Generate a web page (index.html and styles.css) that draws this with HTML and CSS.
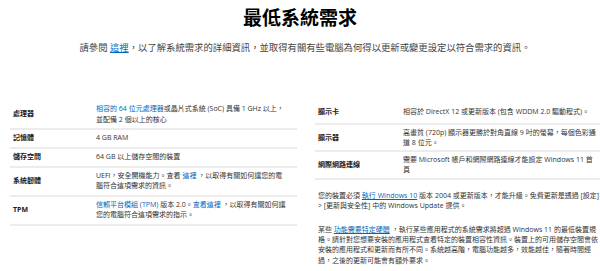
FILE: index.html
```html
<!DOCTYPE html>
<html lang="zh-Hant">
<head>
<meta charset="utf-8">
<title>最低系統需求</title>
<link rel="stylesheet" href="styles.css">
</head>
<body>
<main class="page">
  <h1 class="title">最低系統需求</h1>
  <p class="intro">請參閱 <a class="link-u" href="#">這裡</a>，以了解系統需求的詳細資訊，並取得有關有些電腦為何得以更新或變更設定以符合需求的資訊。</p>
  <div class="cols">
    <div class="spec spec-left">
      <div class="row"><div class="label">處理器</div><div class="value"><a class="link" href="#">相容的 64 位元處理器</a>或晶片式系統 (SoC) 具備 1 GHz 以上，並配備 2 個以上的核心</div></div>
      <div class="row"><div class="label">記憶體</div><div class="value">4 GB RAM</div></div>
      <div class="row"><div class="label">儲存空間</div><div class="value">64 GB 以上儲存空間的裝置</div></div>
      <div class="row"><div class="label">系統韌體</div><div class="value">UEFI，安全開機能力。查看 <a class="link" href="#">這裡</a> ，以取得有關如何讓您的電腦符合這項需求的資訊。</div></div>
      <div class="row"><div class="label">TPM</div><div class="value"><a class="link" href="#">信賴平台模組 (TPM)</a> 版本 2.0。<a class="link" href="#">查看這裡</a> ，以取得有關如何讓您的電腦符合這項需求的指示。</div></div>
    </div>
    <div class="right">
      <div class="spec spec-right">
        <div class="row row-first"><div class="label">顯示卡</div><div class="value">相容於 DirectX 12 或更新版本 (包含 WDDM 2.0 驅動程式)。</div></div>
        <div class="row"><div class="label">顯示器</div><div class="value">高畫質 (720p) 顯示器更勝於對角直線 9 吋的螢幕，每個色彩通道 8 位元。</div></div>
        <div class="row"><div class="label">網際網路連線</div><div class="value">需要 Microsoft 帳戶和網際網路連線才能設定 Windows 11 首頁</div></div>
      </div>
      <p class="note">您的裝置必須 <a class="link-u" href="#">執行 Windows 10</a> 版本 2004 或更新版本，才能升級。免費更新是透過 [設定] &gt; [更新與安全性] 中的 Windows Update 提供。</p>
      <p class="note">某些 <a class="link-u" href="#">功能需要特定硬體</a> ，執行某些應用程式的系統需求將超過 Windows 11 的最低裝置規格。請針對您想要安裝的應用程式查看特定的裝置相容性資訊。裝置上的可用儲存空間會依安裝的應用程式和更新而有所不同。系統越高階，電腦功能越多，效能越佳，隨著時間經過，之後的更新可能會有額外要求。</p>
    </div>
  </div>
</main>
</body>
</html>
```
FILE: styles.css
```css
html, body {
  margin: 0;
  padding: 0;
  background: #ffffff;
}
body {
  font-family: "Open Sans", "Noto Sans CJK TC", sans-serif;
  color: #2f2f2f;
  width: 600px;
  overflow: hidden;
}
.page {
  display: flex;
  flex-direction: column;
  padding: 5px 0 0 10px;
}
.title {
  margin: 0;
  text-align: center;
  font-family: "Noto Sans CJK TC", sans-serif;
  font-size: 19px;
  line-height: 28px;
  font-weight: 700;
  color: #000;
  padding-right: 10px;
  margin-top: -2px;
}
.intro {
  margin: 10px 0 0 0;
  text-align: center;
  font-size: 9.35px;
  line-height: 14px;
  color: #444;
  padding-right: 0;
}
.link {
  color: #0067b8;
  text-decoration: none;
}
.link-u {
  color: #0067b8;
  text-decoration: underline;
}
.cols {
  display: grid;
  grid-template-columns: 287px 1fr;
  column-gap: 18px;
  margin-top: 46px;
  align-items: start;
}
.spec {
  display: flex;
  flex-direction: column;
}
.row {
  display: grid;
  align-items: center;
  padding: 3.3px 0;
  border-bottom: 2px solid #ececec;
  font-size: 7px;
  line-height: 10.2px;
}
.spec-left .row {
  grid-template-columns: 83px 1fr;
  padding-left: 3px;
  padding-right: 8px;
}
.spec-right .row {
  grid-template-columns: 85px 1fr;
  padding: 2.4px 3px;
}
.spec-right .row-first {
  padding-top: 6px;
  padding-bottom: 6px;
}
.label {
  font-weight: 700;
  color: #1a1a1a;
}
.value {
  color: #333;
}
.right {
  display: flex;
  flex-direction: column;
}
.note {
  margin: 11px 0 0 0;
  padding-left: 3px;
  font-size: 7px;
  line-height: 10.2px;
  color: #333;
}
.note + .note {
  margin-top: 14px;
}
```
